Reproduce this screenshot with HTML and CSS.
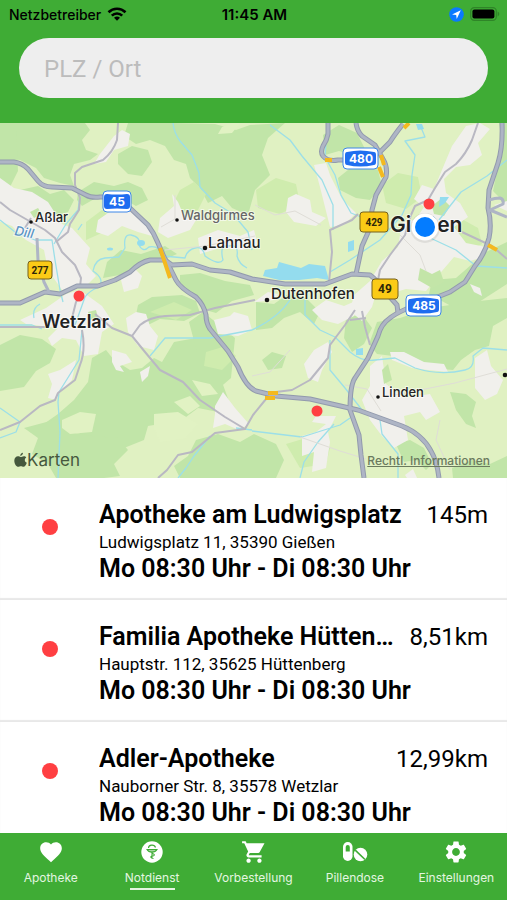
FILE: index.html
```html
<!DOCTYPE html>
<html lang="de">
<head>
    <meta charset="UTF-8">
    <meta name="viewport" content="width=device-width, initial-scale=1.0">
    <title>Notdienst</title>
    <link rel="stylesheet" href="styles.css">
</head>
<body>

    <header class="header">
        <div class="status">
            <div class="carrier">
                Netzbetreiber
                <svg width="20" height="14" viewBox="0 0 20 14" fill="none" stroke="#000" stroke-width="2.6">
                    <path d="M1.5 5.2a12.2 12.2 0 0 1 17 0"/>
                    <path d="M4.8 8.6a7.4 7.4 0 0 1 10.4 0"/>
                    <path d="M7 10.8a4.4 4.4 0 0 1 6 0l-3 3z" fill="#000" stroke="none"/>
                </svg>
            </div>
            <div class="time">11:45 AM</div>
            <div class="indicators">
                <svg width="15" height="15" viewBox="0 0 15 15">
                    <circle cx="7.5" cy="7.5" r="7.3" fill="#0a7aff"/>
                    <path d="M11.8 3.2L3 7.4l4.2.5.5 4.2z" fill="#fff"/>
                </svg>
                <svg width="30" height="14" viewBox="0 0 30 14">
                    <rect x=".7" y=".7" width="25.6" height="12.6" rx="3.6" fill="none" stroke="#2f8528" stroke-width="1.2"/>
                    <rect x="2.4" y="2.4" width="22" height="9.2" rx="2" fill="#000"/>
                    <path d="M27.6 4.6c2.2.8 2.2 4 0 4.8z" fill="#2f8528"/>
                </svg>
            </div>
        </div>
        <form class="search">
            <input type="text" placeholder="PLZ / Ort" aria-label="PLZ / Ort">
        </form>
    </header>

    <div class="map">
        <svg class="map-canvas" viewBox="0 123 507 355" preserveAspectRatio="xMidYMid slice">
            <rect x="0" y="123" width="507" height="355" fill="#e0f1c2"/>

            <!-- forest -->
            <g fill="#c1e5a8">
                <path d="M0 123H85L90 130 82 140 86 150 98 154 90 160 74 164 70 175 74 186 60 183 44 178 36 168 20 160 0 158z"/>
                <path d="M128 123H172L215 124 236 130 250 125 285 123 268 138 262 155 270 175 255 190 248 215 232 208 222 196 208 203 200 188 190 178 186 164 174 160 165 146 150 140 136 144 124 136z"/>
                <path d="M118 154l14-8 16 4 4 12-10 14-14-2-10-10z"/>
                <path d="M78 192l16-10 20 4 14-4 14 6 6 12-12 6-18-10-22 2-14 8-5-6z"/>
                <path d="M20 190l18-4 12 8 14-4 10 10-6 12-14 4-10-8-18 2-8-8z"/>
                <path d="M107 262l14-12 20 4 24-8 12 8-14 6-18 2-20 12-22 4z"/>
                <path d="M180 275l20-2 25 8 25 4 4 10-22 6-16 12-14-4-8-14-14-8z"/>
                <path d="M138 305l14-8 30-2 14 6 4 12-16 8-24-2-16 8-8-12z"/>
                <path d="M0 345l20-10 22 4 14 10-6 14-14 8-12 16-24 4z"/>
                <path d="M92 358l14-8 8 10 16 10 12-2 12-10 8 4 12-20 22-4 14 4 16 22-4 18 8 22-12 8-20-4-16 12-10 2-24 4-4 14-20 8-14-2-28 6-2-18-20-6-12 8-10-8 20-14 16-14 14-18z"/>
                <path d="M24 428l30-8 16 12 22 4 26 2 10 12-14 14 6 12-16 2H56l-8-14-16-10 6-16z"/>
                <path d="M196 440l22-6 22 8 14-8 22 10 8 16-8 18H180l-6-12 14-10z"/>
                <path d="M203 312l20 16 12 10-4 40-14 12-24-14 4-24-8-30z"/>
                <path d="M400 318l30-10 40-6 37-4v20l-14 8-4 20-14 4-14 10-8 10-22-2-18-8-20-4-16-2-8-10 8-22z"/>
                <path d="M432 280l24-2 30-26 21-10v42l-28 18-28 4-22-12z"/>
                <path d="M499 123h8v88l-8-14-6-6 4-20 6-20z"/>
                <path d="M323 135l16-10 18 8 8 16-12 6-14-4-14 4z"/>
                <path d="M338 178l20-16 20 8 4 16-12 14-14-2-16-8z"/>
                <path d="M256 302l18 2 14-10 18 4 14 14-6 12-14-12-16 6-12 10-16 2z"/>
                <path d="M346 318l16-4 10 14-8 16-12 8-8-14z"/>
                <path d="M396 444l14-4 14 8 8 16-6 6-10-10-12 2z"/>
                <path d="M450 392l16 2 10 8-4 14 4 12-10-4-10-14z"/>
                <path d="M262 360l10-8 14 4-4 12-14 2z"/>
                <path d="M452 468l20-8 18 4 17-8v22h-54z"/>
                <path d="M0 123v60l10 4 8-16-2-40z"/>
            </g>
            <g fill="#cfecae">
                <path d="M180 190l14-8 12 12-8 16-16 4-8-12z"/>
                <path d="M86 222l16-12 12 10-10 12-18 8z"/>
                <path d="M256 190l20-12 20 6 4 20-20 10-22-6z"/>
                <path d="M206 352l20-6 10 10-14 14-18-4z"/>
                <path d="M382 185l16-12 20 4 4 20-16 12-20-6z"/>
                <path d="M440 230l20-12 18 10 4 16-16 8-18-6z"/>
                <path d="M286 444l20-6 24 10-4 16-26 4z"/>
                <path d="M150 312l24-10 18 8-16 10z"/>
            </g>
            <g fill="#e1f2c3">
                <path d="M62 420l18-8 16 2-4 18-22 2-8-6z"/>
                <path d="M154 414l24-2 20 12-12 14-26 4-6-14z"/>
                <path d="M174 402l16-6 10 10-12 8z"/>
                <path d="M222 127l10-4h8l-8 10-14 1z"/>
                <path d="M192 380l18 4 8 10-16 2z"/>
            </g>

            <!-- built-up areas -->
            <g fill="#f1f0ec">
                <path d="M114 136l8-6 8 4-2 12-14 4-8 12-12 2 6-10z"/>
                <path d="M0 178l14 10 18 4 16 10 14 22 10 4 18 20-4 16 10 12-10 10-24 4-14-20-4-20-18-10-14-14-16-6z"/>
                <path d="M98 220l20-14 18 4 12 14 4 12-14-4-16-6-14 10-12-4z"/>
                <path d="M160 218l14-12-2-12 6 8 6 14 12 4-6 10-22 8-10-6z"/>
                <path d="M198 238l20-8 22 6 14-6 4 16-16 4-22-2-20 6z"/>
                <path d="M120 276l14-8 8 8-4 12-14 4z"/>
                <path d="M20 320l26-12 20-14 14-4 22 16 12 18-12 8-4 22-14 2-8-16-14-2-10 8-4-8 10-10-32-4z"/>
                <path d="M76 360l-4 20-12 12-4 8-8-2 4-14-4-10 12-4z"/>
                <path d="M126 318l10-6 10 2 4 12 8 10-4 14-16-4-10-14z"/>
                <path d="M112 350l14 4 6 8-12 4 4 6-8-2-4-8z"/>
                <path d="M140 372l10-6-2 10-6 6z"/>
                <path d="M214 320l16-4 4-4 14 4 4 14-14 6-20-2z"/>
                <path d="M215 406l8-14 12 16 14 16-10 6-14-6-12 4 2-14z"/>
                <path d="M288 198l8-4 14 6 2 12 14 6-10 8-22-4-8-10z"/>
                <path d="M314 165l12-2 4 12 12 24 14 14-12 12-14 2-4-16-6-24z"/>
                <path d="M452 146l14-20 14-3 10 6-12 14 4 12-12 10-14 2-12 12 2 14 14 10 8 14-14 10 12 16 20 4-2 10-14 4-16-4-12 14-16 20-20-2-20 6-8-8-6 20-10 14-12-10 4-16 16-14 12-20 16-14 4-24 14-4 8-12-10-8 8-14 12 4z"/>
                <path d="M312 310l14-10 18 6 14-6-4 16-16 8-16-4z"/>
                <path d="M314 350l14-8 4 10-10 18-4 12-10-4-4-14z"/>
                <path d="M370 366l12-10 4 28 18 14 26-4 10 18-14 8-6-8-16 4 4 24-14 8-12-12-12-16-8-20 8-14z"/>
                <path d="M390 352l14 0 20 10 20 2 4 8-20-2-16-2-20-8z"/>
                <path d="M475 358l12-8 4 16 12 14-6 14-12 6-10-12z"/>
                <path d="M302 436l14-4 10-8-14-2 4-6 20 0-8 16 2 10-4 26-14 4 2-20-12 4z"/>
                <path d="M256 302l18-2 4-6-10-2-14 10z"/>
                <path d="M470 284l10 4 2 8-8-4z"/>
                <path d="M405 475l8-6 4 9h-10z"/>
                <path d="M494 205l13-4v10z"/>
            </g>
            <g fill="#c3e5a8">
                <path d="M420 268l12 6 8-4 4 12-12 6-14-8z"/>
                <path d="M432 206l10-8 8 8-6 10-10-2z"/>
                <path d="M382 370l6-6 4 16-8 4z"/>
                <path d="M30 212l8-4 4 6-8 4z"/>
                <path d="M88 312l8-2 2 8-8 2z"/>
            </g>

            <!-- water -->
            <g fill="none" stroke="#9cdfe8" stroke-width="1.3" stroke-linejoin="round">
                <path d="M0 220l15 12 20 8 17 0 3 20 5 30 3 12"/>
                <path d="M40 304q-8 4-6 14M75 325l10-28q4-6 14-10 6-8-6-16 2-12 12-13l14-1 6-9q-2-14 6-13 10 2 8 10 4 8 10 2 10-2 14 9l22 2q2-8 10-10 8-2 10 8 14 10 18 4-4-16 6-14 10-2 8 10 2 8 10 12"/>
                <path d="M173 123q1 10 7 18l12 14 7 18 1 14 15 16 18 11 15 18 4 18"/>
                <path d="M420 125l5 12-20 4 10 14-3 20-1 20-9 20-22 25-30 20-20 12"/>
                <path d="M270 125l20 15 12 16 20 24 11 25v25"/>
                <path d="M327 127l-2 30 10 18 6 20 10 18 10 4"/>
                <path d="M507 160l-20 16-26 16-22 28M426 236l30 14 20 16 31 2"/>
                <path d="M290 300q-12 18-38 30l-42 8h-45l-15 18M305 300v15l15 15 15 7 15 15q12 10 25 8l20-2 20 10q25 8 50 2 10-2 8-14l10-8 24 2"/>
                <path d="M330 340v30l15 18 17 22 18 10 2 14 16 20 0 24M252 431l50 6 38-12 10-7M300 478l4-16 14-20 16-18"/>
                <path d="M82 330l-3 30-20 32-1 10 2 30-2 46M0 408l20 14-4 10-16 6M0 325h32l10 4M210 436l-16 20-8 12-8 10M236 428l16 2"/>
                <path d="M80 196l-2 14-12 14-12 20M82 224l-4 6"/>
            </g>
            <g fill="#94dcee">
                <path d="M265 270l12-2 2-6 22 6 8-4 16 2 4 14-12-2-18 2-20 0-16-4z"/>
                <path d="M348 242l6-2v10l-6 2zM356 349l7-1v7h-7zM440 197l9 0-4 6-6 4z"/>
                <ellipse cx="141" cy="243" rx="4" ry="3"/>
                <ellipse cx="110" cy="249" rx="3" ry="1.5"/>
                <path d="M416 124h6l2 5-6 1z"/>
            </g>

            <!-- small lanes -->
            <g fill="none" stroke="#dfddd7" stroke-width="1">
                <path d="M165 250l40-4 50-10M255 205l20 10 20-4 26 14M300 437l40 14 26 8M395 395l60-12 52-14M345 385l22 4 14 22M440 420l-4 20 14 30M290 350l-20 22-18 4M400 235l20 20 6 16M175 195v24l-14 8"/>
            </g>

            <!-- minor roads -->
            <g fill="none" stroke="#b9b8c2" stroke-width="2" stroke-linejoin="round">
                <path d="M118 123l-1 17q-4 12-14 20l-21 7-7 6v12l5 13-1 12-9 14-2 8-12 10"/>
                <path d="M0 202l10 8 35 20 10 8 7 14 13 13 6 13-1 9M25 228l6-10"/>
                <path d="M0 327h45M72 318l4-16 4-6M82 330q4 20-2 35l-5 15-17 13-3 7-15 6-20 16-20 8"/>
                <path d="M95 314l17 14 20 8 13 16 15 18 23 12 17 18 25 17 20 12 8-14 13-16"/>
                <path d="M276 392l16-2 18-10 18-22 2-13 15-20 10-15"/>
                <path d="M132 336l8-11q10-8 25-9l25-1 25-7 40-8"/>
                <path d="M158 478l9-8 11-15 14-3 23-19 30-4"/>
                <path d="M478 123l-6 17q-6 14-16 24l-11 8-10 16-7 12-13 6-4 9-6 20-15 20-10 15-2 10"/>
                <path d="M329 282l3-30-2-22 22-10 6-6M462 232l30 14 15 13M362 311l3 16 5 18M350 320l16-2"/>
            </g>

            <!-- main roads, outline first and a lighter line on top -->
            <g fill="none" stroke="#929aad" stroke-width="5" stroke-linejoin="round">
                <path id="road-45" d="M0 162h14q8 1 14 7l10 12q5 6 14 6l20 1 14 7q5 3 14 2h14l17 12 17 16q6 8 10 18l6 14 7 13 5 10q4 8 20 17 8 8 10 18 0 8 4 14l18 22 10 16q8 20 18 24l20 5 34 3 48 11 44 16q20 8 29 25 6 10 8 27"/>
                <path id="road-49" d="M0 303h20l25-11 15 2 17-8h21l17-6 15-8q10-10 20-12h15l7 5 20-1 18 6 20 2 22 7 33 5h40l27-10 18 1q8 6 12 13l15 17 1 8"/>
                <path id="road-429" d="M356 123q1 8 6 13l13 9 8 14q5 8 3 18l-10 18-4 15-2 18-8 18-6 28M403 124q-8 10-13 18l-10 10-20 8-22 0q-10 2-15-4-3-4 0-10 4-6 5-12v-11"/>
                <path id="road-485" d="M502 123q1 24-4 40l-9 27-1 18q4 16 1 30-4 16-14 28l-10 16-15 10-20 8q-30 10-40 18-9 6-12 18l-10 22-13 20q-5 7-5 32l9 25 2 20 3 23"/>
            </g>
            <g fill="none" stroke="#aeb5c5" stroke-width="3" stroke-linejoin="round">
                <path d="M37 238l1 22 6 22 5 10M489 200q6-2 11-2 4 1 3 6l-13 6 17 7"/>
            </g>
            <g class="road-fill">
                <path d="M0 162h14q8 1 14 7l10 12q5 6 14 6l20 1 14 7q5 3 14 2h14l17 12 17 16q6 8 10 18l6 14 7 13 5 10q4 8 20 17 8 8 10 18 0 8 4 14l18 22 10 16q8 20 18 24l20 5 34 3 48 11 44 16q20 8 29 25 6 10 8 27"/>
                <path d="M0 303h20l25-11 15 2 17-8h21l17-6 15-8q10-10 20-12h15l7 5 20-1 18 6 20 2 22 7 33 5h40l27-10 18 1q8 6 12 13l15 17 1 8"/>
                <path d="M356 123q1 8 6 13l13 9 8 14q5 8 3 18l-10 18-4 15-2 18-8 18-6 28M403 124q-8 10-13 18l-10 10-20 8-22 0q-10 2-15-4-3-4 0-10 4-6 5-12v-11"/>
                <path d="M502 123q1 24-4 40l-9 27-1 18q4 16 1 30-4 16-14 28l-10 16-15 10-20 8q-30 10-40 18-9 6-12 18l-10 22-13 20q-5 7-5 32l9 25 2 20 3 23"/>
            </g>

            <!-- road works -->
            <g fill="none" stroke="#f4b91f" stroke-width="4">
                <path d="M160 248l10 30M325 160h7M404 128l5-5M381 155l3 10M379 167l4 10M488 245l9 5M268 393h10M265 398h10"/>
            </g>

            <!-- road signs -->
            <g class="sign sign-blue">
                <rect x="103" y="191" width="28" height="21" rx="4"/>
                <path d="M107 194q10 1 20 0 3 0 3 3v9q0 3-3 3-10-1-20 0-3 0-3-3v-9q0-3 3-3z"/>
                <text x="117" y="206">45</text>
                <rect x="343" y="148" width="35" height="21" rx="4"/>
                <path d="M347 152q13-3 27 0 2 0 2 3v7q0 3-2 3-14 3-27 0-2 0-2-3v-7q0-3 2-3z"/>
                <text x="361" y="163">480</text>
                <rect x="406" y="295" width="35" height="21" rx="4"/>
                <path d="M410 299q13-3 27 0 2 0 2 3v7q0 3-2 3-14 3-27 0-2 0-2-3v-7q0-3 2-3z"/>
                <text x="424" y="310">485</text>
            </g>
            <g class="sign sign-yellow">
                <rect x="28" y="261" width="24" height="18" rx="3"/>
                <text x="40" y="274">277</text>
                <rect x="360" y="212" width="28" height="20" rx="3"/>
                <text x="374" y="226">429</text>
                <rect x="372" y="279" width="26" height="20" rx="3"/>
                <text class="sign-large" x="385" y="293">49</text>
            </g>

            <!-- places -->
            <g fill="#111">
                <circle cx="31" cy="222" r="1.8"/>
                <circle cx="177" cy="220" r="1.8"/>
                <circle cx="205" cy="248" r="2.3"/>
                <circle cx="267" cy="300" r="2.3"/>
                <circle cx="378" cy="397" r="1.8"/>
                <circle cx="505" cy="375" r="2.3"/>
            </g>
            <g class="place">
                <text x="35" y="222">Aßlar</text>
                <text class="place-minor" x="181" y="220">Waldgirmes</text>
                <text class="place-town" x="208" y="248">Lahnau</text>
                <text class="place-town" x="271" y="299">Dutenhofen</text>
                <text x="382" y="397">Linden</text>
                <text class="place-city" x="42" y="328">Wetzlar</text>
                <text class="place-capital" x="390" y="232">Gießen</text>
                <text class="place-river" x="14" y="235" transform="rotate(10 14 235)">Dill</text>
            </g>

            <!-- pharmacies and own position -->
            <g fill="#ff3f42">
                <circle cx="79" cy="296" r="5.5"/>
                <circle cx="429" cy="204" r="5.5"/>
                <circle cx="317" cy="411" r="5.5"/>
            </g>
            <circle cx="425" cy="228" r="15" fill="#000" opacity=".08"/>
            <circle cx="425" cy="227" r="13.5" fill="#fff"/>
            <circle cx="425" cy="227" r="10" fill="#047cff"/>
        </svg>
        <div class="map-footer">
            <div class="map-logo">
                <svg width="13" height="16" viewBox="0 0 13 16" fill="#45583d">
                    <path d="M9 .8c.1 1.500-1.100 3-2.700 3.100C6.100 2.400 7.500.9 9 .8zM12.300 5.500c-2.200 1.400-1.900 4.300.5 5.300-.6 1.800-1.900 4-3.300 4-1 0-1.400-.6-2.600-.6s-1.600.6-2.600.6C2.300 14.800.3 11.600.3 8.700c0-2.800 1.800-4.400 3.600-4.400 1.100 0 2 .7 2.800.7.700 0 1.800-.8 3.200-.8 1 0 1.900.5 2.400 1.300z"/>
                </svg>
                Karten
            </div>
            <a class="map-legal" href="#">Rechtl. Informationen</a>
        </div>
    </div>

    <main class="list">
        <article class="entry">
            <span class="dot"></span>
            <div class="info">
                <div class="headline">
                    <h2>Apotheke am Ludwigsplatz</h2>
                    <span class="distance">145m</span>
                </div>
                <p class="address">Ludwigsplatz 11, 35390 Gießen</p>
                <p class="hours">Mo 08:30 Uhr - Di 08:30 Uhr</p>
            </div>
        </article>
        <article class="entry">
            <span class="dot"></span>
            <div class="info">
                <div class="headline">
                    <h2>Familia Apotheke Hütten…</h2>
                    <span class="distance">8,51km</span>
                </div>
                <p class="address">Hauptstr. 112, 35625 Hüttenberg</p>
                <p class="hours">Mo 08:30 Uhr - Di 08:30 Uhr</p>
            </div>
        </article>
        <article class="entry">
            <span class="dot"></span>
            <div class="info">
                <div class="headline">
                    <h2>Adler-Apotheke</h2>
                    <span class="distance">12,99km</span>
                </div>
                <p class="address">Nauborner Str. 8, 35578 Wetzlar</p>
                <p class="hours">Mo 08:30 Uhr - Di 08:30 Uhr</p>
            </div>
        </article>
    </main>

    <nav class="tabs">
        <a class="tab" href="#">
            <svg width="26" height="26" viewBox="0 0 24 24" fill="#fff">
                <path d="M12 21.350l-1.450-1.320C5.400 15.360 2 12.280 2 8.500 2 5.420 4.420 3 7.500 3c1.740 0 3.410.81 4.500 2.090C13.090 3.810 14.760 3 16.500 3 19.580 3 22 5.420 22 8.500c0 3.780-3.400 6.860-8.550 11.540z"/>
            </svg>
            <span>Apotheke</span>
        </a>
        <a class="tab active" href="#">
            <svg width="26" height="26" viewBox="0 0 26 26">
                <circle cx="13" cy="13" r="10.700" fill="#fff"/>
                <g fill="none" stroke="#3fac35" stroke-width="1.100">
                    <path d="M8 10.500c2 3.500 8 3.500 10 0z" fill="#a5d7a0"/>
                    <path d="M9.500 9c0-3.500 6-4 7-.5M13 13v7M13.500 14.500c3 1 2 2.500-.5 2.500-2 .5-1.500 2 1.500 2.500"/>
                </g>
            </svg>
            <span>Notdienst</span>
        </a>
        <a class="tab" href="#">
            <svg width="26" height="26" viewBox="0 0 24 24" fill="#fff">
                <path d="M7 18c-1.100 0-1.990.9-1.990 2S5.900 22 7 22s2-.9 2-2-.9-2-2-2zM1 2v2h2l3.600 7.590-1.350 2.450c-.16.28-.25.61-.25.960 0 1.100.9 2 2 2h12v-2H7.420c-.14 0-.25-.11-.25-.25l.03-.12.9-1.630h7.450c.75 0 1.410-.41 1.750-1.030L21.700 4H5.210l-.94-2H1zm16 16c-1.100 0-1.990.9-1.990 2s.89 2 1.990 2 2-.9 2-2-.9-2-2-2z"/>
            </svg>
            <span>Vorbestellung</span>
        </a>
        <a class="tab" href="#">
            <svg width="26" height="26" viewBox="0 0 26 26">
                <rect x="1" y="3" width="9.500" height="19" rx="4.750" fill="#fff"/>
                <path d="M3.700 12.500V8a2.050 2.050 0 0 1 4.100 0v4.500z" fill="#3fac35"/>
                <circle cx="18.500" cy="15.500" r="6.800" fill="#fff"/>
                <path d="M13.200 11.200l9.800 9.300" stroke="#3fac35" stroke-width="1.600"/>
            </svg>
            <span>Pillendose</span>
        </a>
        <a class="tab" href="#">
            <svg width="26" height="26" viewBox="0 0 24 24" fill="#fff">
                <path d="M19.140 12.940c.04-.3.06-.61.06-.94 0-.32-.02-.64-.07-.94l2.030-1.580c.18-.14.23-.41.12-.61l-1.920-3.320c-.12-.22-.37-.29-.59-.22l-2.390.96c-.5-.38-1.030-.7-1.620-.94l-.36-2.540c-.04-.24-.24-.41-.48-.41h-3.840c-.24 0-.43.17-.47.41l-.36 2.540c-.59.24-1.130.57-1.620.94l-2.390-.96c-.22-.08-.47 0-.59.22L2.740 8.870c-.12.21-.08.47.12.61l2.030 1.580c-.05.3-.09.63-.09.940s.02.64.07.94l-2.030 1.580c-.18.14-.23.41-.12.61l1.920 3.320c.12.22.37.29.59.22l2.390-.96c.5.38 1.030.7 1.620.94l.36 2.540c.05.24.24.41.48.41h3.840c.24 0 .44-.17.47-.41l.36-2.540c.59-.24 1.130-.56 1.620-.94l2.390.96c.22.08.47 0 .59-.22l1.920-3.320c.12-.22.07-.47-.12-.61l-2.010-1.580zM12 15.600c-1.980 0-3.600-1.620-3.600-3.600s1.620-3.600 3.600-3.600 3.600 1.620 3.600 3.600-1.620 3.600-3.600 3.600z"/>
            </svg>
            <span>Einstellungen</span>
        </a>
    </nav>

</body>
</html>
```
FILE: styles.css
```css
* {
    box-sizing: border-box;
}
body {
    display: flex;
    flex-direction: column;
    height: 100vh;
    margin: 0;
    font-family: Roboto, sans-serif;
    color: #000;
    background-color: white;
}
h2, p {
    margin: 0;
}

/* header */
.header {
    flex: none;
    padding-bottom: 25px;
    background-color: #3fac35;
}
.status {
    display: grid;
    grid-template-columns: 1fr auto 1fr;
    align-items: center;
    height: 28px;
    padding: 0 7px 0 9px;
    font-family: Inter, sans-serif;
    font-size: 14px;
    font-weight: 500;
}
.carrier, .indicators {
    display: flex;
    align-items: center;
    gap: 6px;
}
.time {
    font-size: 15px;
    font-weight: 600;
}
.indicators {
    justify-content: flex-end;
}
.search {
    margin: 10px 19px 0;
}
.search input {
    display: block;
    width: 100%;
    height: 60px;
    padding: 2px 25px 0;
    border: none;
    border-radius: 30px;
    background-color: #eee;
    font-family: Roboto, sans-serif;
    font-size: 24px;
    color: #333;
}
.search input::placeholder {
    color: #bcbcbc;
}

/* map */
.map {
    flex: none;
    position: relative;
}
.map-canvas {
    display: block;
    width: 100%;
    height: auto;
}
.map-footer {
    position: absolute;
    left: 14px;
    right: 17px;
    bottom: 8px;
    display: flex;
    justify-content: space-between;
    align-items: center;
}
.map-logo {
    display: flex;
    align-items: center;
    font-family: Inter, sans-serif;
    font-size: 17px;
    color: #45583d;
}
.map-legal {
    font-family: Inter, sans-serif;
    font-size: 12px;
    font-weight: 500;
    color: #6b7a5e;
}
.road-fill {
    fill: none;
    stroke: #aeb5c5;
    stroke-width: 3px;
}
.sign text {
    font-family: Inter, sans-serif;
    font-size: 12px;
    font-weight: 700;
    text-anchor: middle;
}
.sign-blue rect {
    fill: white;
    stroke: #3c86e8;
}
.sign-blue path {
    fill: #1f6df0;
}
.sign-blue text {
    fill: white;
}
.sign-yellow rect {
    fill: #fbcb16;
    stroke: #75601c;
}
.sign-yellow text {
    font-family: Roboto, sans-serif;
    font-size: 10px;
    fill: #2d2608;
}
.sign-yellow .sign-large {
    font-size: 12px;
}
.place text {
    font-family: Inter, sans-serif;
    font-size: 13px;
    font-weight: 500;
    fill: #222;
    stroke: white;
    stroke-opacity: 0.6;
    stroke-width: 2px;
    paint-order: stroke;
}
.place .place-minor {
    fill: #666;
}
.place .place-town {
    font-size: 15px;
}
.place .place-city {
    font-size: 18px;
    font-weight: 600;
}
.place .place-capital {
    font-size: 21px;
    font-weight: 600;
}
.place .place-river {
    font-style: italic;
    fill: #5a94c4;
}

/* pharmacies */
.list {
    flex: 1;
    min-height: 0;
    overflow-y: auto;
    scrollbar-width: none;
}
.entry {
    display: flex;
    gap: 41px;
    height: 122px;
    padding: 22px 19px 0 42px;
    box-shadow: inset 0 -2px 1px #e8e8e8;
}
.dot {
    flex: none;
    width: 16px;
    height: 16px;
    margin-top: 19px;
    border-radius: 50%;
    background-color: #ff3f42;
}
.info {
    flex: 1;
    min-width: 0;
}
.headline {
    display: flex;
    justify-content: space-between;
    gap: 12px;
    line-height: 30px;
}
.headline h2 {
    overflow: hidden;
    font-size: 25px;
    font-weight: 600;
    white-space: nowrap;
    text-overflow: ellipsis;
}
.distance {
    flex: none;
    font-size: 24px;
}
.address {
    font-size: 17px;
    line-height: 24px;
}
.hours {
    font-size: 25px;
    font-weight: 600;
    line-height: 30px;
}

/* tab bar */
.tabs {
    flex: none;
    display: flex;
    height: 67px;
    background-color: #3fac35;
}
.tab {
    flex: 1 1 0;
    display: flex;
    flex-direction: column;
    align-items: center;
    gap: 4px;
    min-width: 0;
    padding-top: 6px;
    font-family: Inter, sans-serif;
    font-size: 12px;
    line-height: 18px;
    color: #e4f6e1;
    text-decoration: none;
}
.tab.active::after {
    content: "";
    width: 45px;
    height: 2px;
    margin-top: -3px;
    background-color: #e4f6e1;
}
```
